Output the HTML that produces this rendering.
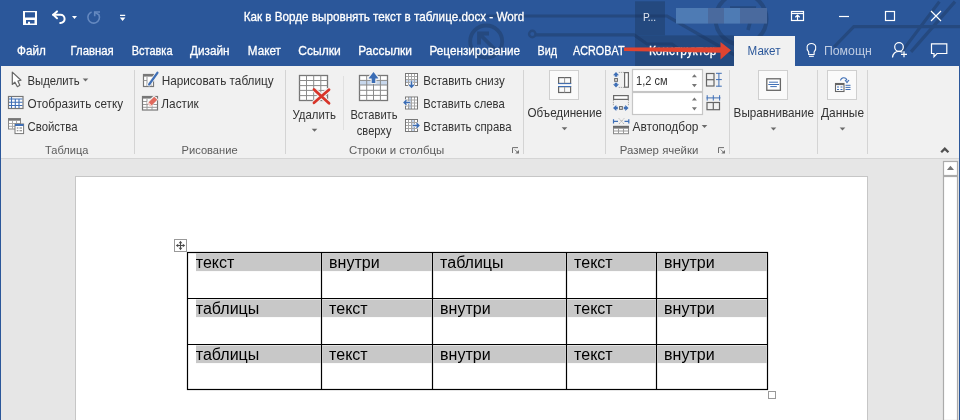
<!DOCTYPE html>
<html><head><meta charset="utf-8"><style>
html,body{margin:0;padding:0;width:960px;height:420px;overflow:hidden;background:#E6E6E6}
svg{display:block;font-family:"Liberation Sans", sans-serif;will-change:transform}
</style></head><body>
<svg width="960" height="420" viewBox="0 0 960 420">
<rect x="0" y="0" width="960" height="66" fill="#2B579A" />
<g stroke="#25497F" stroke-width="3.2" fill="none"><circle cx="486.2" cy="41.5" r="16" stroke-width="3.8"/>
<path d="M479 44.5 V33.5 H489 M480 34.5 L494.5 49" stroke-width="3.8"/>
<path d="M440 16 H667 L740 58"/>
<circle cx="532.3" cy="34" r="3.2" stroke-width="2.4"/>
<path d="M535.5 34.8 H634 L647 44 H672 L680 50"/>
<circle cx="741" cy="19" r="25.5" stroke-width="4"/>
<path d="M730 8 H754 L748 30" stroke-width="3.5"/>
<path d="M834 47 L853.8 26.7 H960"/>
<path d="M901.7 51.9 L939.4 1.6 M911 51.9 L955 1.6"/></g>
<clipPath id="dk"><rect x="635" y="1.3" width="30" height="35"/><rect x="635" y="35.4" width="99" height="31"/></clipPath>
<rect x="635" y="1.3" width="30" height="34.1" fill="#24497F" />
<rect x="635" y="35.4" width="99" height="30.6" fill="#24497F" />
<g stroke="#1F3F70" stroke-width="3.2" fill="none" clip-path="url(#dk)"><circle cx="486.2" cy="41.5" r="16" stroke-width="3.8"/>
<path d="M479 44.5 V33.5 H489 M480 34.5 L494.5 49" stroke-width="3.8"/>
<path d="M440 16 H667 L740 58"/>
<circle cx="532.3" cy="34" r="3.2" stroke-width="2.4"/>
<path d="M535.5 34.8 H634 L647 44 H672 L680 50"/>
<circle cx="741" cy="19" r="25.5" stroke-width="4"/>
<path d="M730 8 H754 L748 30" stroke-width="3.5"/>
<path d="M834 47 L853.8 26.7 H960"/>
<path d="M901.7 51.9 L939.4 1.6 M911 51.9 L955 1.6"/></g>
<path fill="#fff" fill-rule="evenodd" d="M23 11 H37 V25 H23 Z M25 12.3 V17.4 H35 V12.3 Z M26 20 V23.6 H28 V21.8 H30 V23.6 H34.5 V20 Z"/>
<g stroke="#fff" stroke-width="2" fill="none" stroke-linecap="round" stroke-linejoin="round">
<path d="M53 14.8 H60.5 A4.1 4.1 0 0 1 60.5 23 H60.2"/>
<path d="M57 11.4 L53.3 14.8 L57 18.2"/>
</g>
<path d="M72 16 H77 L74.5 19 Z" fill="#fff"/>
<path d="M91.6 11.9 A5.8 5.8 0 1 0 98.9 14.8 L95 12.4" stroke="#6589C0" stroke-width="1.6" fill="none"/>
<path d="M94.7 16.3 V12 H100" stroke="#6589C0" stroke-width="1.6" fill="none"/>
<path d="M120 14.8 H125.2 V16.1 H120 Z M119.8 17.4 H125.4 L122.6 21 Z" fill="#fff"/>
<text x="243.70" y="20.8" font-size="12.6" fill="#FFFFFF" textLength="280.50" lengthAdjust="spacingAndGlyphs" stroke="#fff" stroke-width="0.3">Как в Ворде выровнять текст в таблице.docx - Word</text>
<text x="642.90" y="20.8" font-size="10.9" fill="#DDE4EF" textLength="13.30" lengthAdjust="spacingAndGlyphs" >Р...</text>
<rect x="676" y="8" width="32" height="15.6" fill="#4E7BB4" />
<rect x="708" y="8" width="16" height="15.6" fill="#4A6A9E" />
<rect x="724" y="8" width="16" height="15.6" fill="#4E7BB4" />
<rect x="740" y="8" width="27" height="15.6" fill="#4A6A9E" />
<g stroke="#fff" stroke-width="1.2" fill="none">
<rect x="791.5" y="11.5" width="12" height="9"/>
<path d="M791.5 13.5 H803.5"/>
<path d="M797.5 20 V15.3 M795.3 17.3 L797.5 15.2 L799.7 17.3"/>
<path d="M839 16.5 H849"/>
<rect x="885.5" y="11.5" width="9" height="9"/>
<path d="M931 11 L941 21 M941 11 L931 21"/>
</g>
<text x="17.00" y="54.6" font-size="12.3" fill="#FFFFFF" textLength="28.74" lengthAdjust="spacingAndGlyphs" stroke="#fff" stroke-width="0.3">Файл</text>
<text x="70.50" y="54.6" font-size="12.3" fill="#FFFFFF" textLength="43.25" lengthAdjust="spacingAndGlyphs" stroke="#fff" stroke-width="0.3">Главная</text>
<text x="131.75" y="54.6" font-size="12.3" fill="#FFFFFF" textLength="40.74" lengthAdjust="spacingAndGlyphs" stroke="#fff" stroke-width="0.3">Вставка</text>
<text x="190.00" y="54.6" font-size="12.3" fill="#FFFFFF" textLength="39.50" lengthAdjust="spacingAndGlyphs" stroke="#fff" stroke-width="0.3">Дизайн</text>
<text x="247.80" y="54.6" font-size="12.3" fill="#FFFFFF" textLength="33.10" lengthAdjust="spacingAndGlyphs" stroke="#fff" stroke-width="0.3">Макет</text>
<text x="298.25" y="54.6" font-size="12.3" fill="#FFFFFF" textLength="42.49" lengthAdjust="spacingAndGlyphs" stroke="#fff" stroke-width="0.3">Ссылки</text>
<text x="358.25" y="54.6" font-size="12.3" fill="#FFFFFF" textLength="53.75" lengthAdjust="spacingAndGlyphs" stroke="#fff" stroke-width="0.3">Рассылки</text>
<text x="429.50" y="54.6" font-size="12.3" fill="#FFFFFF" textLength="90.50" lengthAdjust="spacingAndGlyphs" stroke="#fff" stroke-width="0.3">Рецензирование</text>
<text x="537.50" y="54.6" font-size="12.3" fill="#FFFFFF" textLength="19.50" lengthAdjust="spacingAndGlyphs" stroke="#fff" stroke-width="0.3">Вид</text>
<text x="573.00" y="54.6" font-size="12.3" fill="#FFFFFF" textLength="51.50" lengthAdjust="spacingAndGlyphs" stroke="#fff" stroke-width="0.3">ACROBAT</text>
<text x="648.90" y="54.6" font-size="12.3" fill="#FFFFFF" textLength="67.50" lengthAdjust="spacingAndGlyphs" stroke="#fff" stroke-width="0.3">Конструктор</text>
<rect x="734" y="36" width="61" height="30" fill="#F1F1F1" />
<text x="747.60" y="54.6" font-size="12.3" fill="#2B579A" textLength="32.90" lengthAdjust="spacingAndGlyphs" >Макет</text>
<path d="M624 47.4 L720.5 47.2 L720.5 41.9 L731 50.3 L720.5 59.6 L720.5 52.8 L624 50.9 Z" fill="#E04430"/>
<g stroke="#fff" stroke-width="1.1" fill="none">
<path d="M808.7 52 C806 49 806.3 43.5 811.4 43.5 C816.5 43.5 816.8 49 814.1 52 V54.5 H808.7 Z"/>
<path d="M809 56.3 H813.8"/>
</g>
<text x="823.90" y="54.6" font-size="12.3" fill="#BFCCE2" textLength="47.99" lengthAdjust="spacingAndGlyphs" >Помощн</text>
<g stroke="#fff" stroke-width="1.2" fill="none">
<circle cx="899" cy="47" r="4.3"/>
<path d="M892.5 57.5 C893 53 896 51.3 899 51.3 C900.5 51.3 901.5 51.6 902.5 52.2"/>
<path d="M901 54.3 H907 M904 51.3 V57.3"/>
<path d="M931.5 43.8 H946.8 V53.5 H937 L934 56.8 V53.5 H931.5 Z"/>
</g>
<rect x="0" y="66" width="960" height="92" fill="#F1F1F1" />
<rect x="0" y="158" width="960" height="1" fill="#D5D5D5" />
<rect x="134" y="70" width="1" height="84" fill="#D4D4D4" />
<rect x="285" y="70" width="1" height="84" fill="#D4D4D4" />
<rect x="523" y="70" width="1" height="84" fill="#D4D4D4" />
<rect x="605" y="70" width="1" height="84" fill="#D4D4D4" />
<rect x="729" y="70" width="1" height="84" fill="#D4D4D4" />
<rect x="817" y="70" width="1" height="84" fill="#D4D4D4" />
<rect x="867" y="70" width="1" height="84" fill="#D4D4D4" />
<rect x="343" y="76" width="1" height="54" fill="#E0E0E0" />
<path d="M12.3 72.1 V84.5 L14.8 82.1 L17.4 86.7 L19.8 85.2 L17.9 81 L21 80.2 Z" fill="#fff" stroke="#666" stroke-width="1.2" stroke-linejoin="round"/>
<text x="27.50" y="84.7" font-size="12.2" fill="#333333" textLength="52.20" lengthAdjust="spacingAndGlyphs" >Выделить</text>
<path d="M82.7 78.6 H88.3 L85.5 81.6 Z" fill="#6A6A6A"/>
<rect x="8.5" y="96.5" width="14.5" height="12" fill="#fff" stroke="#777" stroke-width="1.2"/>
<g stroke="#3F6FB6" stroke-width="1.1">
<path d="M11.5 97 V108 M9 99 H22.5 M9 102.3 H22.5 M9 105.5 H22.5 M15.3 99 V108 M19 99 V108"/>
</g>
<text x="27.50" y="108" font-size="12.2" fill="#333333" textLength="95.50" lengthAdjust="spacingAndGlyphs" >Отобразить сетку</text>
<rect x="8.5" y="118.5" width="12" height="10.5" fill="#fff" stroke="#888" stroke-width="1"/>
<rect x="8.5" y="118.5" width="12" height="2.2" fill="#777"/>
<path d="M9 123.5 H20 M9 126.3 H20 M12.5 121 V129 M16.5 121 V129" stroke="#aaa" stroke-width="1"/>
<rect x="15" y="124" width="8.6" height="9.6" fill="#fff" stroke="#777" stroke-width="1"/>
<rect x="15" y="124" width="8.6" height="2" fill="#3F6FB6"/>
<path d="M16.8 128 H18.4 M19.5 128 H22 M16.8 130.8 H18.4 M19.5 130.8 H22" stroke="#777" stroke-width="1.1"/>
<text x="27.50" y="130.7" font-size="12.2" fill="#333333" textLength="49.99" lengthAdjust="spacingAndGlyphs" >Свойства</text>
<text x="45.00" y="153.8" font-size="11.5" fill="#5C5C5C" textLength="43.39" lengthAdjust="spacingAndGlyphs" >Таблица</text>
<rect x="143.5" y="74.5" width="10" height="12" fill="#fff" stroke="#777" stroke-width="1.2"/>
<rect x="143" y="74" width="11" height="2.6" fill="#777"/>
<path d="M147 77 V86 M143.5 80.5 H147 M151 82 V86" stroke="#999" stroke-width="1"/>
<path d="M149 84.5 L157.6 72.6" stroke="#F1F1F1" stroke-width="3.8" stroke-linecap="round"/>
<path d="M149.2 84.3 L157.4 72.8" stroke="#3F6FB6" stroke-width="2.3" stroke-linecap="round"/>
<path d="M148.3 85.6 L149 83.6 L150.3 84.6 Z" fill="#3F6FB6"/>
<text x="161.70" y="84.7" font-size="12.2" fill="#333333" textLength="112.00" lengthAdjust="spacingAndGlyphs" >Нарисовать таблицу</text>
<rect x="142.5" y="96.5" width="15" height="13.5" fill="#fff" stroke="#777" stroke-width="1.2"/>
<rect x="142" y="96" width="11" height="2.6" fill="#777"/>
<path d="M143 104.5 H157 M143 107.3 H157 M147 99 V110 M152 104 V110 M143 101.5 H147" stroke="#999" stroke-width="1"/>
<path d="M146.6 102.6 L154 95.2 L158.4 99.6 L151 107 Z" fill="#F1F1F1"/>
<path d="M148.6 102.3 L154.2 96.7 L157.3 99.8 L151.7 105.4 Z" fill="#E06A5E"/>
<path d="M147.3 103.6 L148.6 102.3 L151.7 105.4 L150.4 106.7 Z" fill="#F3C8C3"/>
<text x="161.30" y="107.8" font-size="12.2" fill="#333333" textLength="37.44" lengthAdjust="spacingAndGlyphs" >Ластик</text>
<text x="181.60" y="153.8" font-size="11.5" fill="#5C5C5C" textLength="56.00" lengthAdjust="spacingAndGlyphs" >Рисование</text>
<rect x="299.5" y="75.5" width="28" height="25" fill="#fff" stroke="#777" stroke-width="1.3"/>
<path d="M306.5 75.5 V100.5 M313.7 75.5 V100.5 M320.8 75.5 V100.5 M299.5 80.5 H327.5 M299.5 85.6 H327.5 M299.5 90.4 H327.5 M299.5 95.6 H327.5" stroke="#8a8a8a" stroke-width="1"/>
<path d="M314 89.5 L329 103.3 M329 89.7 L314 102.8" stroke="#F1F1F1" stroke-width="5"/>
<path d="M314 89.5 L329 103.3 M329 89.7 L314 102.8" stroke="#D8352A" stroke-width="2.8" stroke-linecap="round"/>
<text x="292.50" y="119" font-size="12.2" fill="#333333" textLength="43.50" lengthAdjust="spacingAndGlyphs" >Удалить</text>
<path d="M311.7 128.8 H317.3 L314.5 131.8 Z" fill="#6A6A6A"/>
<rect x="359.5" y="75.5" width="28" height="25" fill="#fff" stroke="#777" stroke-width="1.3"/>
<rect x="360" y="80.5" width="27" height="4.6" fill="#C7D7EC"/>
<path d="M366.7 75.5 V100.5 M373.5 75.5 V100.5 M380.4 75.5 V100.5 M359.5 80.4 H387.5 M359.5 85 H387.5 M359.5 90.3 H387.5 M359.5 95.4 H387.5" stroke="#8a8a8a" stroke-width="1"/>
<path d="M373.5 70.5 L380 78 L376.4 78 L376.4 84 L370.6 84 L370.6 78 L367 78 Z" fill="#F1F1F1"/>
<path d="M373.5 72 L378.5 78.5 L375.3 78.5 L375.3 83 L371.7 83 L371.7 78.5 L368.5 78.5 Z" fill="#3B6DB5"/>
<text x="350.40" y="119" font-size="12.2" fill="#333333" textLength="47.10" lengthAdjust="spacingAndGlyphs" >Вставить</text>
<text x="356.80" y="135.3" font-size="12.2" fill="#333333" textLength="34.70" lengthAdjust="spacingAndGlyphs" >сверху</text>
<rect x="405.5" y="73.5" width="12" height="12" fill="#A6A6A6" stroke="#777" stroke-width="1"/><rect x="406" y="74" width="2" height="2" fill="#FFFFFF"/><rect x="406" y="77" width="2" height="2" fill="#FFFFFF"/><rect x="406" y="80" width="2" height="2" fill="#C5D6EE"/><rect x="406" y="83" width="2" height="2" fill="#FFFFFF"/><rect x="409" y="74" width="2" height="2" fill="#FFFFFF"/><rect x="409" y="77" width="2" height="2" fill="#FFFFFF"/><rect x="409" y="80" width="2" height="2" fill="#C5D6EE"/><rect x="409" y="83" width="2" height="2" fill="#FFFFFF"/><rect x="412" y="74" width="2" height="2" fill="#FFFFFF"/><rect x="412" y="77" width="2" height="2" fill="#FFFFFF"/><rect x="412" y="80" width="2" height="2" fill="#C5D6EE"/><rect x="412" y="83" width="2" height="2" fill="#FFFFFF"/><rect x="415" y="74" width="2" height="2" fill="#FFFFFF"/><rect x="415" y="77" width="2" height="2" fill="#FFFFFF"/><rect x="415" y="80" width="2" height="2" fill="#C5D6EE"/><rect x="415" y="83" width="2" height="2" fill="#FFFFFF"/><path d="M411.5 82 V87 M409 84.7 L411.5 87.4 L414 84.7" stroke="#F1F1F1" stroke-width="3.2" fill="none"/><path d="M411.5 81.5 V87 M409.3 84.8 L411.5 87.2 L413.7 84.8" stroke="#3B6DB5" stroke-width="1.5" fill="none" stroke-linejoin="miter"/>
<text x="423.30" y="84.6" font-size="12.2" fill="#333333" textLength="81.40" lengthAdjust="spacingAndGlyphs" >Вставить снизу</text>
<rect x="405.5" y="97.0" width="12" height="12" fill="#A6A6A6" stroke="#777" stroke-width="1"/><rect x="406" y="97.5" width="2" height="2" fill="#FFFFFF"/><rect x="406" y="100.5" width="2" height="2" fill="#FFFFFF"/><rect x="406" y="103.5" width="2" height="2" fill="#FFFFFF"/><rect x="406" y="106.5" width="2" height="2" fill="#FFFFFF"/><rect x="409" y="97.5" width="2" height="2" fill="#C5D6EE"/><rect x="409" y="100.5" width="2" height="2" fill="#C5D6EE"/><rect x="409" y="103.5" width="2" height="2" fill="#C5D6EE"/><rect x="409" y="106.5" width="2" height="2" fill="#C5D6EE"/><rect x="412" y="97.5" width="2" height="2" fill="#FFFFFF"/><rect x="412" y="100.5" width="2" height="2" fill="#FFFFFF"/><rect x="412" y="103.5" width="2" height="2" fill="#FFFFFF"/><rect x="412" y="106.5" width="2" height="2" fill="#FFFFFF"/><rect x="415" y="97.5" width="2" height="2" fill="#FFFFFF"/><rect x="415" y="100.5" width="2" height="2" fill="#FFFFFF"/><rect x="415" y="103.5" width="2" height="2" fill="#FFFFFF"/><rect x="415" y="106.5" width="2" height="2" fill="#FFFFFF"/><path d="M404 102.5 H410 M406.3 100.2 L404 102.5 L406.3 104.8" stroke="#F1F1F1" stroke-width="3.2" fill="none"/><path d="M404.2 102.5 H410 M406.4 100.3 L404.2 102.5 L406.4 104.7" stroke="#3B6DB5" stroke-width="1.5" fill="none" stroke-linejoin="miter"/>
<text x="423.30" y="107.9" font-size="12.2" fill="#333333" textLength="81.39" lengthAdjust="spacingAndGlyphs" >Вставить слева</text>
<rect x="405.5" y="119.5" width="12" height="12" fill="#A6A6A6" stroke="#777" stroke-width="1"/><rect x="406" y="120" width="2" height="2" fill="#FFFFFF"/><rect x="406" y="123" width="2" height="2" fill="#FFFFFF"/><rect x="406" y="126" width="2" height="2" fill="#FFFFFF"/><rect x="406" y="129" width="2" height="2" fill="#FFFFFF"/><rect x="409" y="120" width="2" height="2" fill="#FFFFFF"/><rect x="409" y="123" width="2" height="2" fill="#FFFFFF"/><rect x="409" y="126" width="2" height="2" fill="#FFFFFF"/><rect x="409" y="129" width="2" height="2" fill="#FFFFFF"/><rect x="412" y="120" width="2" height="2" fill="#C5D6EE"/><rect x="412" y="123" width="2" height="2" fill="#C5D6EE"/><rect x="412" y="126" width="2" height="2" fill="#C5D6EE"/><rect x="412" y="129" width="2" height="2" fill="#C5D6EE"/><rect x="415" y="120" width="2" height="2" fill="#FFFFFF"/><rect x="415" y="123" width="2" height="2" fill="#FFFFFF"/><rect x="415" y="126" width="2" height="2" fill="#FFFFFF"/><rect x="415" y="129" width="2" height="2" fill="#FFFFFF"/><path d="M413 125.5 H419 M416.7 123.2 L419 125.5 L416.7 127.8" stroke="#F1F1F1" stroke-width="3.2" fill="none"/><path d="M413 125.5 H418.8 M416.6 123.3 L418.8 125.5 L416.6 127.7" stroke="#3B6DB5" stroke-width="1.5" fill="none" stroke-linejoin="miter"/>
<text x="423.30" y="130.5" font-size="12.2" fill="#333333" textLength="88.20" lengthAdjust="spacingAndGlyphs" >Вставить справа</text>
<text x="348.90" y="153.8" font-size="11.5" fill="#5C5C5C" textLength="95.39" lengthAdjust="spacingAndGlyphs" >Строки и столбцы</text>
<g transform="translate(0,0)"><path d="M512.5 147.6 H518 M512.5 147.6 V153" stroke="#707070" stroke-width="1" fill="none"/><path d="M514.8 149.6 L517.5 152.3" stroke="#707070" stroke-width="0.9"/><path d="M515.3 153.6 H519 V149.9 Z" fill="#707070"/></g>
<rect x="549.5" y="70.5" width="29" height="29" fill="#FAFAFA" stroke="#CFCFCF" stroke-width="1"/>
<rect x="558.6" y="77.6" width="12" height="5.8" fill="none" stroke="#666" stroke-width="1.2"/>
<rect x="558.6" y="86.7" width="12" height="5.8" fill="none" stroke="#666" stroke-width="1.2"/>
<path d="M564.6 77.6 V83.4 M564.6 86.7 V92.5" stroke="#999" stroke-width="1"/>
<path d="M558 83.6 H571.2 M558 86.5 H571.2" stroke="#3F6FB6" stroke-width="1"/>
<text x="527.50" y="117" font-size="12.2" fill="#333333" textLength="74.50" lengthAdjust="spacingAndGlyphs" >Объединение</text>
<path d="M561.7 127.2 H567.3 L564.5 130.2 Z" fill="#6A6A6A"/>
<path d="M616 72 L619 75.3 H617.3 V76.8 H614.7 V75.3 H613 Z M616 87.6 L619 84.3 H617.3 V82.8 H614.7 V84.3 H613 Z" fill="#3F6FB6"/>
<rect x="614.7" y="78.6" width="2.7" height="2.7" fill="#fff" stroke="#6A6A6A" stroke-width="1.1"/>
<path d="M618.8 72.4 H623.8 M618.8 87.4 H623.8" stroke="#888" stroke-width="0.9" stroke-dasharray="1 1"/>
<rect x="624.6" y="72.6" width="3.8" height="14.6" fill="#fff" stroke="#6A6A6A" stroke-width="1.2"/>
<g transform="translate(621,103) rotate(-90) translate(-621,-80)"><path d="M616 72 L619 75.3 H617.3 V76.8 H614.7 V75.3 H613 Z M616 87.6 L619 84.3 H617.3 V82.8 H614.7 V84.3 H613 Z" fill="#3F6FB6"/>
<rect x="614.7" y="78.6" width="2.7" height="2.7" fill="#fff" stroke="#6A6A6A" stroke-width="1.1"/>
<path d="M618.8 72.4 H623.8 M618.8 87.4 H623.8" stroke="#888" stroke-width="0.9" stroke-dasharray="1 1"/>
<rect x="624.6" y="72.6" width="3.8" height="14.6" fill="#fff" stroke="#6A6A6A" stroke-width="1.2"/></g>
<rect x="632.5" y="69.5" width="70" height="22" fill="#FFFFFF" stroke="#C6C6C6" stroke-width="1.2"/>
<rect x="632.5" y="92.5" width="70" height="22" fill="#FFFFFF" stroke="#C6C6C6" stroke-width="1.2"/>
<text x="636.00" y="85" font-size="12.6" fill="#333" textLength="31.51" lengthAdjust="spacingAndGlyphs" >1,2 см</text>
<path d="M691.9 77.3 L694.4 74.3 L696.9 77.3 Z M691.9 84 L694.4 87.2 L696.9 84 Z M691.9 100.5 L694.4 97.5 L696.9 100.5 Z M691.9 107.2 L694.4 110.4 L696.9 107.2 Z" fill="#777"/>
<rect x="706.5" y="73.5" width="7.5" height="12.5" fill="none" stroke="#666" stroke-width="1.2"/>
<path d="M706.5 79.7 H714" stroke="#666" stroke-width="1.2"/>
<path d="M718.9 73 V86.5 M716 73.3 H721.8 M716 79.6 H721.8 M716 86.2 H721.8" stroke="#3F6FB6" stroke-width="1"/>
<rect x="707" y="102.5" width="12.5" height="7.2" fill="none" stroke="#666" stroke-width="1.2"/>
<path d="M713.3 102.5 V109.7" stroke="#666" stroke-width="1.2"/>
<path d="M706.5 97.9 H720.5 M707.2 95.2 V100.6 M713.3 95.2 V100.6 M719.6 95.2 V100.6" stroke="#3F6FB6" stroke-width="1"/>
<path d="M613.5 121.3 H618 M624.5 121.3 H629 M613.5 119.2 V123.4 M628.8 119.2 V123.4" stroke="#3F6FB6" stroke-width="1.2"/>
<path d="M619 118.5 L624 124 M624 118.5 L619 124" stroke="#999" stroke-width="0.9" stroke-dasharray="1.2 0.8"/>
<rect x="613" y="125.8" width="16" height="2.6" fill="#6A6A6A"/>
<rect x="613.5" y="128.2" width="15" height="5.5" fill="#fff" stroke="#888" stroke-width="1"/>
<path d="M613.5 131 H628.5 M618.5 128.5 V133.5 M623.5 128.5 V133.5" stroke="#999" stroke-width="1"/>
<text x="632.60" y="130.5" font-size="12.2" fill="#333333" textLength="65.81" lengthAdjust="spacingAndGlyphs" >Автоподбор</text>
<path d="M701.7 125.1 H707.3 L704.5 128.1 Z" fill="#6A6A6A"/>
<text x="619.70" y="153.8" font-size="11.5" fill="#5C5C5C" textLength="78.70" lengthAdjust="spacingAndGlyphs" >Размер ячейки</text>
<g transform="translate(206,0)"><path d="M512.5 147.6 H518 M512.5 147.6 V153" stroke="#707070" stroke-width="1" fill="none"/><path d="M514.8 149.6 L517.5 152.3" stroke="#707070" stroke-width="0.9"/><path d="M515.3 153.6 H519 V149.9 Z" fill="#707070"/></g>
<rect x="758.5" y="70.5" width="29" height="29" fill="#FAFAFA" stroke="#CFCFCF" stroke-width="1"/>
<rect x="766.8" y="78.8" width="13.6" height="11.5" fill="#fff" stroke="#666" stroke-width="1.3"/>
<path d="M769 82.2 H778 M768.3 84.5 H779 M770.3 86.6 H776.8" stroke="#3F6FB6" stroke-width="1"/>
<text x="733.60" y="117" font-size="12.2" fill="#333333" textLength="80.30" lengthAdjust="spacingAndGlyphs" >Выравнивание</text>
<path d="M770.7 127.4 H776.3 L773.5 130.4 Z" fill="#6A6A6A"/>
<rect x="827.5" y="70.5" width="29" height="29" fill="#FAFAFA" stroke="#CFCFCF" stroke-width="1"/>
<rect x="835.5" y="83.5" width="8.5" height="8" fill="#fff" stroke="#666" stroke-width="1.1"/>
<rect x="835.5" y="83.5" width="8.5" height="1.6" fill="#666"/>
<path d="M837 87 H839 M840.5 87 H842.5 M837 89.5 H839 M840.5 89.5 H842.5" stroke="#3F6FB6" stroke-width="1"/>
<path d="M845.5 85.3 H850.5 M845.5 87.4 H850.5 M845.5 89.5 H850.5" stroke="#3F6FB6" stroke-width="1"/>
<path d="M840.5 80.5 C841 77 846 76.5 847 80.5" stroke="#3F6FB6" stroke-width="1.1" fill="none"/>
<path d="M845 80 L847 82.6 L849 80" stroke="#3F6FB6" stroke-width="1.1" fill="none"/>
<text x="821.00" y="117" font-size="12.2" fill="#333333" textLength="43.00" lengthAdjust="spacingAndGlyphs" >Данные</text>
<path d="M839.7 127.4 H845.3 L842.5 130.4 Z" fill="#6A6A6A"/>
<path d="M941.2 152.2 L944.8 148.6 L948.4 152.2" stroke="#505050" stroke-width="2.3" fill="none"/>
<rect x="0" y="159" width="958" height="261" fill="#E6E6E6" />
<rect x="75.5" y="176.5" width="792" height="250" fill="#FFFFFF" stroke="#C6C6C6" stroke-width="1"/>
<rect x="943.5" y="176.5" width="14" height="244" fill="#FFFFFF" stroke="#ABABAB" stroke-width="1.2"/>
<rect x="943.5" y="161.5" width="14" height="14" fill="#FFFFFF" stroke="#ABABAB" stroke-width="1.2"/>
<path d="M946.9 170 L950.5 165.8 L954 170 Z" fill="#777"/>
<rect x="0" y="66" width="1" height="354" fill="#2B579A" />
<rect x="959" y="66" width="1" height="354" fill="#2B579A" />
<rect x="196" y="253.5" width="124.5" height="17.6" fill="#C8C8C8" />
<text x="195.8" y="267.8" font-size="16" fill="#000" >текст</text>
<rect x="322.5" y="253.5" width="109.0" height="17.6" fill="#C8C8C8" />
<text x="329.1" y="267.8" font-size="16" fill="#000" >внутри</text>
<rect x="433.5" y="253.5" width="132.0" height="17.6" fill="#C8C8C8" />
<text x="440.1" y="267.8" font-size="16" fill="#000" >таблицы</text>
<rect x="567.5" y="253.5" width="88.0" height="17.6" fill="#C8C8C8" />
<text x="574.1" y="267.8" font-size="16" fill="#000" >текст</text>
<rect x="657.5" y="253.5" width="109.0" height="17.6" fill="#C8C8C8" />
<text x="664.1" y="267.8" font-size="16" fill="#000" >внутри</text>
<rect x="196" y="299.5" width="124.5" height="17.6" fill="#C8C8C8" />
<text x="195.8" y="313.8" font-size="16" fill="#000" >таблицы</text>
<rect x="322.5" y="299.5" width="109.0" height="17.6" fill="#C8C8C8" />
<text x="329.1" y="313.8" font-size="16" fill="#000" >текст</text>
<rect x="433.5" y="299.5" width="132.0" height="17.6" fill="#C8C8C8" />
<text x="440.1" y="313.8" font-size="16" fill="#000" >внутри</text>
<rect x="567.5" y="299.5" width="88.0" height="17.6" fill="#C8C8C8" />
<text x="574.1" y="313.8" font-size="16" fill="#000" >текст</text>
<rect x="657.5" y="299.5" width="109.0" height="17.6" fill="#C8C8C8" />
<text x="664.1" y="313.8" font-size="16" fill="#000" >внутри</text>
<rect x="196" y="345.5" width="124.5" height="17.6" fill="#C8C8C8" />
<text x="195.8" y="359.8" font-size="16" fill="#000" >таблицы</text>
<rect x="322.5" y="345.5" width="109.0" height="17.6" fill="#C8C8C8" />
<text x="329.1" y="359.8" font-size="16" fill="#000" >текст</text>
<rect x="433.5" y="345.5" width="132.0" height="17.6" fill="#C8C8C8" />
<text x="440.1" y="359.8" font-size="16" fill="#000" >внутри</text>
<rect x="567.5" y="345.5" width="88.0" height="17.6" fill="#C8C8C8" />
<text x="574.1" y="359.8" font-size="16" fill="#000" >текст</text>
<rect x="657.5" y="345.5" width="109.0" height="17.6" fill="#C8C8C8" />
<text x="664.1" y="359.8" font-size="16" fill="#000" >внутри</text>
<g stroke="#000" stroke-width="1.2" fill="none">
<rect x="187.5" y="252.5" width="580.0" height="137.0"/>
<path d="M321.5 252.5 V389.5"/>
<path d="M432.5 252.5 V389.5"/>
<path d="M566.5 252.5 V389.5"/>
<path d="M656.5 252.5 V389.5"/>
<path d="M187.5 298.5 H767.5"/>
<path d="M187.5 344.5 H767.5"/>
</g>
<rect x="174.5" y="239.5" width="12" height="12" fill="#fff" stroke="#999" stroke-width="1"/>
<path d="M180.5 242 V249 M177 245.5 H184" stroke="#4A4A4A" stroke-width="1.1"/>
<path d="M180.5 240.8 L178.7 243.2 H182.3 Z M180.5 250.2 L178.7 247.8 H182.3 Z M175.8 245.5 L178.2 243.7 V247.3 Z M185.2 245.5 L182.8 243.7 V247.3 Z" fill="#4A4A4A"/>
<rect x="768.5" y="391.5" width="7" height="7" fill="#fff" stroke="#999" stroke-width="1"/>
</svg>
</body></html>
